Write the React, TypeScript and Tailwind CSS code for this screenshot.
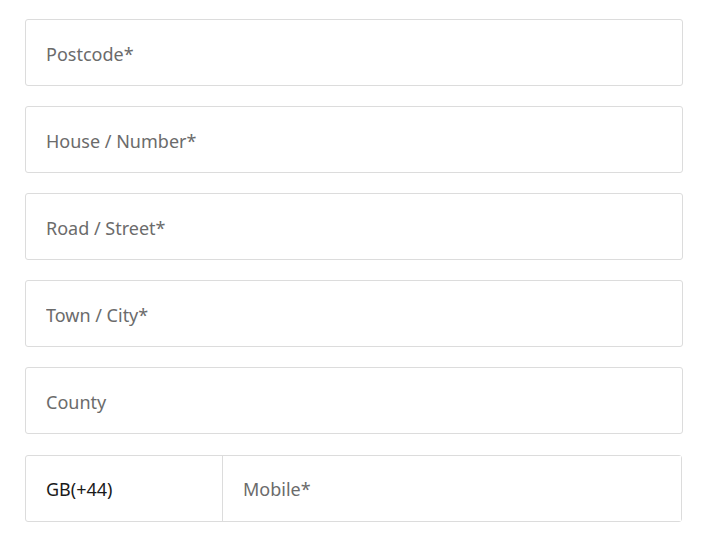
import React from 'react'

const fields = ['Postcode*', 'House / Number*', 'Road / Street*', 'Town / City*', 'County']

const App = () => {
  return (
    <div className="min-h-screen bg-white pl-[25px] pt-[19px]" style={{ fontFamily: '"Noto Sans", "Open Sans", sans-serif' }}>
      <form className="flex w-[658px] flex-col gap-[20px]">
        {fields.map((f) => (
          <input
            key={f}
            type="text"
            placeholder={f}
            className="h-[67px] w-full rounded-[3px] border border-[#dcdcdc] bg-white pl-[20px] pt-[2px] text-[18px] text-[#222] outline-none placeholder:text-[#6b6b6b]"
          />
        ))}
        <div className="mt-px flex h-[67px] w-[657px] rounded-[3px] border border-[#dcdcdc]">
          <div className="flex w-[197px] items-center border-r border-[#dcdcdc] pl-[20px] pt-[2px] text-[18px] text-[#1a1a1a]">
            GB(+44)
          </div>
          <input
            type="text"
            placeholder="Mobile*"
            className="flex-1 bg-white pl-[20px] pt-[2px] text-[18px] text-[#222] outline-none placeholder:text-[#6b6b6b]"
          />
        </div>
      </form>
    </div>
  )
}

export default App
